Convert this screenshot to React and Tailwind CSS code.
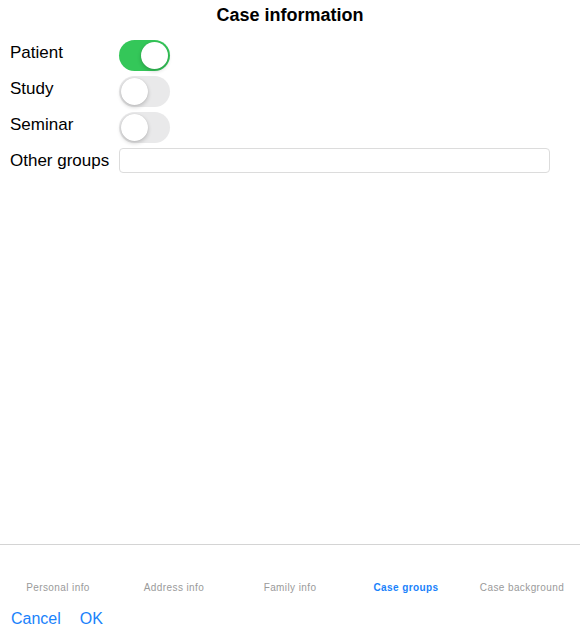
import React, { useState } from 'react';

const Toggle = ({ on, onChange }) => (
  <button
    onClick={onChange}
    className={`relative h-[31px] w-[51px] rounded-full transition-colors ${on ? 'bg-[#34c759]' : 'bg-[#e9e9ea]'}`}
  >
    <span
      className={`absolute top-[2px] h-[27px] w-[27px] rounded-full bg-white shadow-[0_2px_4px_rgba(0,0,0,0.2),0_0_1px_rgba(0,0,0,0.15)] ${on ? 'left-[22px]' : 'left-[2px]'}`}
    />
  </button>
);

const tabs = ['Personal info', 'Address info', 'Family info', 'Case groups', 'Case background'];

export default function App() {
  const [groups, setGroups] = useState({ patient: true, study: false, seminar: false });
  const [other, setOther] = useState('');

  const rows = [
    { id: 'patient', label: 'Patient' },
    { id: 'study', label: 'Study' },
    { id: 'seminar', label: 'Seminar' }
  ];

  return (
    <div className="flex h-[640px] w-[580px] flex-col bg-white font-['Liberation_Sans',Arial,sans-serif] text-black">
      {/* Header */}
      <div className="pt-[4px] text-center text-[18px] font-bold leading-[22px]">Case information</div>

      {/* Form */}
      <div className="mt-[14px] flex flex-col gap-[5px] pl-[10px] pr-[30px]">
        {rows.map((r) => (
          <div key={r.id} className="flex items-center">
            <span className="w-[109px] pb-[6px] text-[17px] leading-[22px]">{r.label}</span>
            <Toggle on={groups[r.id]} onChange={() => setGroups({ ...groups, [r.id]: !groups[r.id] })} />
          </div>
        ))}
        <div className="flex items-center">
          <span className="w-[109px] text-[17px] leading-[22px]">Other groups</span>
          <input
            value={other}
            onChange={(e) => setOther(e.target.value)}
            className="h-[25px] flex-1 rounded-[4px] border border-[#dcdcdc] px-2 text-[15px] outline-none"
          />
        </div>
      </div>

      <div className="flex-1" />

      {/* Bottom bar */}
      <div className="border-t border-[#d4d4d4]">
        <div className="grid grid-cols-5 pt-[37px]">
          {tabs.map((t) => (
            <div
              key={t}
              className={`text-center text-[10px] leading-[12px] tracking-[0.4px] ${t === 'Case groups' ? 'font-bold text-[#1a82fb]' : 'text-[#9a9a9a]'}`}
            >
              {t}
            </div>
          ))}
        </div>
        <div className="flex gap-[19px] px-[11px] pt-[15px] pb-[11px] text-[16px] leading-[20px] text-[#1a82fb]">
          <button>Cancel</button>
          <button>OK</button>
        </div>
      </div>
    </div>
  );
}
